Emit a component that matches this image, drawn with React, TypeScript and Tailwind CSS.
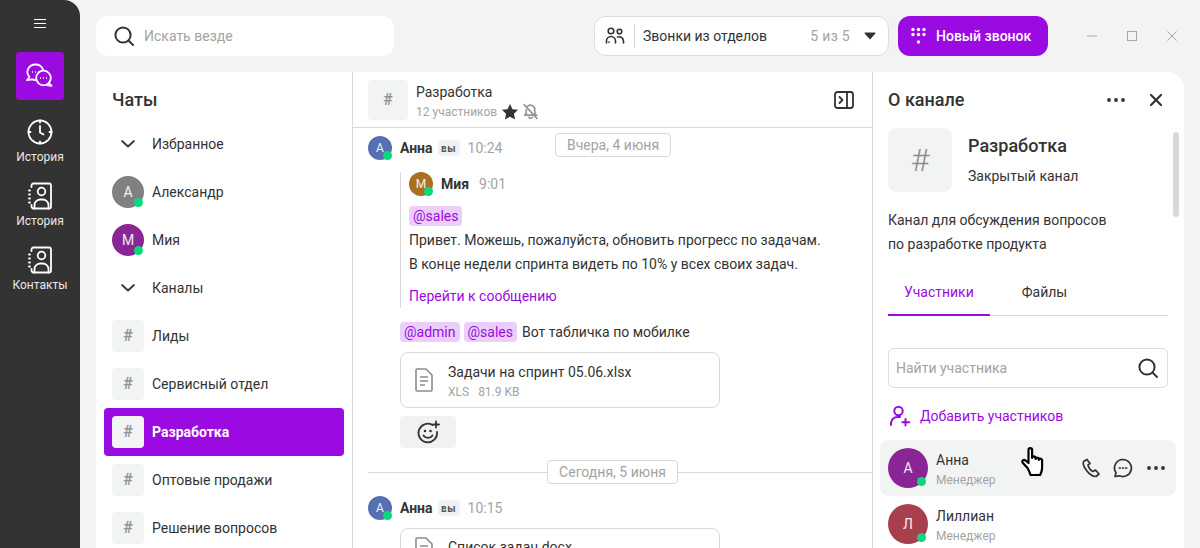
import React from "react";

const P = "#9b0ae0";

function Dot({ className = "" }: { className?: string }) {
  return <span className={"absolute rounded-full bg-[#0ad87a] " + className} />;
}

function Avatar({ letter, color, size }: { letter: string; color: string; size: 24 | 32 | 40 }) {
  const cls = size === 24 ? "w-6 h-6 text-xs" : size === 32 ? "w-8 h-8 text-sm" : "w-10 h-10 text-sm";
  const dot =
    size === 24
      ? "w-[9px] h-[9px] right-0 bottom-0"
      : size === 32
        ? "w-[9px] h-[9px] right-px bottom-px"
        : "w-[9px] h-[9px] right-[2px] bottom-[2px]";
  return (
    <div className={"relative shrink-0 rounded-full flex items-center justify-center text-white/90 " + cls} style={{ backgroundColor: color }}>
      {letter}
      <Dot className={dot} />
    </div>
  );
}

function Hash() {
  return <div className="w-8 h-8 shrink-0 rounded bg-[#f2f4f3] flex items-center justify-center text-[#949494] text-base font-bold">#</div>;
}

function Chevron() {
  return (
    <div className="w-8 flex justify-center shrink-0">
      <svg width="16" height="10" viewBox="0 0 16 10" fill="none" stroke="#333" strokeWidth="1.700" strokeLinecap="round" strokeLinejoin="round">
        <path d="M2 2l6 5.500L14 2" />
      </svg>
    </div>
  );
}

function SearchIcon({ size = 24 }: { size?: number }) {
  return (
    <svg width={size} height={size} viewBox="0 0 24 24" fill="none" stroke="#333" strokeWidth="2" strokeLinecap="round">
      <circle cx="11" cy="11" r="7.600" />
      <path d="M17 17l4 4" />
    </svg>
  );
}

function Dots({ color = "#333" }: { color?: string }) {
  return (
    <svg width="20" height="6" viewBox="0 0 20 6" fill={color}>
      <circle cx="3" cy="3" r="1.900" />
      <circle cx="10" cy="3" r="1.900" />
      <circle cx="17" cy="3" r="1.900" />
    </svg>
  );
}

function ContactIcon() {
  return (
    <svg width="26" height="28" viewBox="0 0 26 28" fill="none" stroke="#fff" strokeWidth="1.800" strokeLinecap="round">
      <path d="M4.500 5V3.500A2 2 0 0 1 6.500 1.500H22A2 2 0 0 1 24 3.500V24.500A2 2 0 0 1 22 26.500H6.500A2 2 0 0 1 4.500 24.500V23" />
      <circle cx="14.500" cy="9.500" r="3.800" />
      <path d="M7.500 26.500V23a6 5.500 0 0 1 6-5.500h2a6 5.500 0 0 1 6 5.500v3.500" />
      <path d="M2 8.500h1M2 12.500h1M2 16.500h1M2 20.500h1" strokeWidth="1.800" />
    </svg>
  );
}

function NavItem({ icon, label }: { icon: React.ReactNode; label: string }) {
  return (
    <div className="h-16 flex flex-col items-center">
      <div className="h-[30px] flex items-center justify-center mt-[5px]">{icon}</div>
      <span className="text-xs leading-4 text-[#e8e8e8] mt-[2px]">{label}</span>
    </div>
  );
}

function Sidebar() {
  return (
    <aside className="w-20 shrink-0 bg-[#333333] rounded-tr-2xl flex flex-col items-center">
      <div className="h-[52px] pt-[19px] flex flex-col gap-[3px] items-center shrink-0">
        <span className="w-3 h-px bg-white block" />
        <span className="w-3 h-px bg-white block" />
        <span className="w-3 h-px bg-white block" />
      </div>
      <div className="w-12 h-12 rounded bg-[#9b0ae0] flex items-center justify-center shrink-0">
        <svg width="30" height="26" viewBox="0 0 30 26" fill="none" stroke="#fff" strokeWidth="1.800">
          <path d="M18 6.500A8 7.500 0 0 0 10.500 1.500a8 7.500 0 0 0-6 12.500L2 17.200l5.500-.8a8 8 0 0 0 3 .6" strokeLinejoin="round" strokeLinecap="round" />
          <circle cx="18.500" cy="15" r="7.300" />
          <path d="M24 20l2.500 2.800-5-.8" strokeLinejoin="round" />
          <path d="M7 9h1M10 9h1M13 9h1M15 15h1M18 15h1M21 15h1" strokeWidth="1.600" />
        </svg>
      </div>
      <div className="mt-3 flex flex-col w-full">
        <NavItem
          label="История"
          icon={
            <svg width="26" height="26" viewBox="0 0 26 26" fill="none" stroke="#fff" strokeWidth="1.800" strokeLinecap="round" strokeLinejoin="round">
              <circle cx="13" cy="13" r="11.500" />
              <path d="M13 7v6.500l3.500 2" />
              <path d="M13 1.500v2M13 22.500v2M1.500 13h2M22.500 13h2" />
            </svg>
          }
        />
        <NavItem label="История" icon={<ContactIcon />} />
        <NavItem label="Контакты" icon={<ContactIcon />} />
      </div>
    </aside>
  );
}

function TopBar() {
  return (
    <header className="h-[72px] shrink-0 flex items-center pl-4">
      <div className="w-[298px] h-10 bg-white rounded-xl flex items-center pl-[16px] gap-[8px]">
        <SearchIcon />
        <span className="text-sm text-[#a3a3a3]">Искать везде</span>
      </div>
      <div className="ml-[200px] w-[295px] h-10 shrink-0 bg-white rounded-xl border border-[#dcdcdc] flex items-center pl-[10px] pr-[12px]">
        <svg width="20" height="18" viewBox="0 0 20 18" fill="none" stroke="#333" strokeWidth="1.600" strokeLinecap="round">
          <circle cx="6" cy="4" r="2.800" />
          <circle cx="14.500" cy="4.500" r="2.300" />
          <path d="M1.500 16v-2a4.500 4.500 0 0 1 9 0v2M12.500 10a4.500 4.500 0 0 1 6 4v2M4 15l.1.1" />
        </svg>
        <span className="w-px h-6 bg-[#dcdcdc] ml-[9px] mr-[8px]" />
        <span className="text-sm text-[#333]">Звонки из отделов</span>
        <span className="ml-auto text-sm text-[#a3a3a3] tracking-[0.3px]">5 из 5</span>
        <svg className="ml-[14px]" width="12" height="8" viewBox="0 0 12 8" fill="#333">
          <path d="M1 .5h10a.6.6 0 0 1 .4 1L6.500 7a.7.7 0 0 1-1 0L.6 1.500a.6.6 0 0 1 .4-1z" />
        </svg>
      </div>
      <div className="ml-[9px] w-[150px] h-10 shrink-0 rounded-xl bg-[#9b0ae0] flex items-center pl-[12px] gap-[9px]">
        <svg width="17" height="18" viewBox="0 0 17 18" fill="#fff">
          <circle cx="3" cy="2.500" r="1.700" /><circle cx="8.500" cy="2.500" r="1.700" /><circle cx="14" cy="2.500" r="1.700" />
          <circle cx="3" cy="7.500" r="1.700" /><circle cx="8.500" cy="7.500" r="1.700" /><circle cx="14" cy="7.500" r="1.700" />
          <circle cx="8.500" cy="15" r="1.700" />
        </svg>
        <span className="text-sm font-medium text-white">Новый звонок</span>
      </div>
      <div className="ml-[39px] flex items-center gap-[30px]">
        <svg width="10" height="10" viewBox="0 0 10 10" stroke="#a6a6a6" fill="none"><path d="M0 5h10" /></svg>
        <svg width="10" height="10" viewBox="0 0 10 10" stroke="#a6a6a6" fill="none"><rect x=".5" y=".5" width="9" height="9" /></svg>
        <svg width="10" height="10" viewBox="0 0 10 10" stroke="#a6a6a6" fill="none"><path d="M.5.5l9 9M9.500.5l-9 9" /></svg>
      </div>
    </header>
  );
}

function ChatRow({ children, label, active }: { children: React.ReactNode; label: string; active?: boolean }) {
  return (
    <div className={"h-12 mx-2 px-2 rounded flex items-center gap-2 shrink-0 " + (active ? "bg-[#9b0ae0]" : "")}>
      {children}
      <span className={"text-sm " + (active ? "text-white font-bold" : "text-[#333]")}>{label}</span>
    </div>
  );
}

function ChatList() {
  return (
    <section className="w-[257px] shrink-0 bg-white border-r border-[#d9d9d9] flex flex-col overflow-hidden">
      <div className="h-12 shrink-0 pl-4 pt-2 flex items-center text-lg font-medium text-[#333]">Чаты</div>
      <ChatRow label="Избранное"><Chevron /></ChatRow>
      <ChatRow label="Александр"><Avatar letter="А" color="#808080" size={32} /></ChatRow>
      <ChatRow label="Мия"><Avatar letter="М" color="#8a2596" size={32} /></ChatRow>
      <ChatRow label="Каналы"><Chevron /></ChatRow>
      <ChatRow label="Лиды"><Hash /></ChatRow>
      <ChatRow label="Сервисный отдел"><Hash /></ChatRow>
      <ChatRow label="Разработка" active><Hash /></ChatRow>
      <ChatRow label="Оптовые продажи"><Hash /></ChatRow>
      <ChatRow label="Решение вопросов"><Hash /></ChatRow>
    </section>
  );
}

function Sender({ letter, color, name, you, time }: { letter: string; color: string; name: string; you?: boolean; time: string }) {
  return (
    <div className="flex items-center h-6">
      <Avatar letter={letter} color={color} size={24} />
      <span className="ml-2 text-sm font-bold text-[#333]">{name}</span>
      {you && (
        <span className="ml-[5px] w-[22px] h-4 rounded-sm bg-[#f0f2f1] flex items-center justify-center text-[10px] font-bold text-[#555] tracking-[0.5px]">
          вы
        </span>
      )}
      <span className={"text-sm text-[#a3a3a3] " + (you ? "ml-2" : "ml-[10px]")}>{time}</span>
    </div>
  );
}

function Chip({ children }: { children: React.ReactNode }) {
  return <span className="inline-flex items-center h-5 px-1 rounded bg-[#ebcffa] text-sm text-[#9b0ae0]">{children}</span>;
}

function FileIcon() {
  return (
    <svg width="18" height="24" viewBox="0 0 18 24" fill="none" stroke="#8c8c8c" strokeWidth="1.600" strokeLinejoin="round">
      <path d="M2 1h9l6 6v15a1 1 0 0 1-1 1H2a1 1 0 0 1-1-1V2a1 1 0 0 1 1-1z" />
      <path d="M5 9h8M5 13h8M5 17h5" />
    </svg>
  );
}

function DatePill({ children }: { children: React.ReactNode }) {
  return <span className="h-6 px-[11px] rounded border border-[#d9d9d9] bg-white flex items-center text-sm text-[#a3a3a3]">{children}</span>;
}

function ChatPanel() {
  return (
    <section className="w-[520px] shrink-0 bg-white border-r border-[#d9d9d9] flex flex-col overflow-hidden relative">
      <div className="h-14 shrink-0 border-b border-[#d9d9d9] flex items-center pl-[15px] pr-[18px]">
        <div className="w-10 h-10 rounded bg-[#f2f4f3] flex items-center justify-center text-[#949494] font-bold">#</div>
        <div className="ml-2">
          <div className="text-sm leading-5 text-[#333] mt-[2px]">Разработка</div>
          <div className="flex items-center h-4 mt-[2px]">
            <span className="text-xs text-[#a3a3a3]">12 участников</span>
            <svg className="ml-[4px]" width="18" height="18" viewBox="0 0 16 16" fill="#333">
              <path d="M8 .8l2.200 4.700 5 .6-3.700 3.500 1 5.100L8 12.200l-4.500 2.500 1-5.100L.8 6.100l5-.6z" />
            </svg>
            <svg className="ml-[3px]" width="17" height="17" viewBox="0 0 16 16" fill="none" stroke="#949494" strokeWidth="1.600" strokeLinecap="round">
              <path d="M4 11.500h9.500l-1.500-2V6.500A4 4 0 0 0 5.500 3M4 6.500v3l-1.500 2M6.500 13.500a1.700 1.700 0 0 0 3 0M2 1.500l12 13" />
            </svg>
          </div>
        </div>
        <svg className="ml-auto" width="20" height="18" viewBox="0 0 20 18" fill="none" stroke="#333" strokeWidth="1.800" strokeLinecap="round" strokeLinejoin="round">
          <rect x="1" y="1" width="18" height="16" rx="2.500" />
          <path d="M13 1v16M5.500 6l3 3-3 3" />
        </svg>
      </div>
      <div className="absolute top-[61px] left-[202px]">
        <DatePill>Вчера, 4 июня</DatePill>
      </div>
      <div className="pl-[15px] pt-2 flex flex-col">
        <Sender letter="А" color="#5470b0" name="Анна" you time="10:24" />
        <div className="ml-8 mt-3 border-l border-[#d9d9d9] pl-2 h-[136px]">
          <Sender letter="М" color="#a9701f" name="Мия" time="9:01" />
          <div className="mt-[10px] h-5 flex"><Chip>@sales</Chip></div>
          <div className="mt-[2px] text-sm leading-6 text-[#333]">
            <div>Привет. Можешь, пожалуйста, обновить прогресс по задачам.</div>
            <div>В конце недели спринта видеть по 10% у всех своих задач.</div>
          </div>
          <div className="mt-2 text-sm leading-6 text-[#9b0ae0]">Перейти к сообщению</div>
        </div>
        <div className="ml-8 mt-[14px] h-5 flex items-center gap-[4px] text-sm text-[#333]">
          <Chip>@admin</Chip>
          <Chip>@sales</Chip>
          <span className="ml-px">Вот табличка по мобилке</span>
        </div>
        <div className="ml-8 mt-[10px] w-80 h-14 rounded-lg border border-[#d9d9d9] flex items-center pl-[14px] gap-[15px]">
          <FileIcon />
          <div className="mt-[2px]">
            <div className="text-sm leading-5 text-[#333]">Задачи на спринт 05.06.xlsx</div>
            <div className="text-xs leading-4 mt-[2px] text-[#a3a3a3] flex gap-[9px]"><span>XLS</span><span>81.9 KB</span></div>
          </div>
        </div>
        <div className="ml-8 mt-2 w-14 h-8 rounded bg-[#f0f2f1] flex items-center justify-center">
          <svg width="24" height="24" viewBox="0 0 24 24" fill="none" stroke="#333" strokeWidth="1.800" strokeLinecap="round">
            <path d="M16.500 5A9.300 9.300 0 1 0 21 12" />
            <circle cx="9" cy="11" r=".6" fill="#333" strokeWidth="1.400" />
            <circle cx="14.500" cy="11" r=".6" fill="#333" strokeWidth="1.400" />
            <path d="M7.500 15.500a5.500 5.500 0 0 0 9 0M20 1.500v6M17 4.500h6" />
          </svg>
        </div>
        <div className="relative mt-3 h-6 flex items-center justify-center">
          <div className="absolute left-0 right-0 top-3 h-px bg-[#d9d9d9]" />
          <div className="relative -ml-[15px]"><DatePill>Сегодня, 5 июня</DatePill></div>
        </div>
        <div className="mt-3">
          <Sender letter="А" color="#5470b0" name="Анна" you time="10:15" />
        </div>
        <div className="ml-8 mt-2 w-80 h-14 rounded-lg border border-[#d9d9d9] flex items-start pl-[14px] pt-[8px] gap-[15px] shrink-0">
          <FileIcon />
          <div className="text-sm leading-5 text-[#333]">Список задач.docx</div>
        </div>
      </div>
    </section>
  );
}

function Member({ letter, color, name, active }: { letter: string; color: string; name: string; active?: boolean }) {
  return (
    <div className={"h-14 w-[296px] ml-[7px] pl-2 pr-[10px] rounded-lg flex items-center shrink-0 " + (active ? "bg-[#f2f4f3]" : "")}>
      <Avatar letter={letter} color={color} size={40} />
      <div className="ml-2 mt-[2px]">
        <div className="text-sm leading-5 text-[#333]">{name}</div>
        <div className="text-xs leading-4 mt-[2px] text-[#a3a3a3]">Менеджер</div>
      </div>
      {active && (
        <div className="ml-auto flex items-center">
          <svg width="20" height="20" viewBox="0 0 20 20" fill="none" stroke="#333" strokeWidth="1.700" strokeLinejoin="round">
            <path d="M6 1.500L2.500 3.500C1 7 7.500 18.500 15 18.500l3-2.500-3.500-4-2.700 1.500C10 12.500 7.500 9.500 7 7l2-1.500z" />
          </svg>
          <svg className="ml-[12px]" width="20" height="20" viewBox="0 0 20 20" fill="none" stroke="#333" strokeWidth="1.700" strokeLinejoin="round">
            <path d="M10 1.500a8.500 8.500 0 1 1-3.500 16.300L2 18.500l1-3.700A8.500 8.500 0 0 1 10 1.500z" />
            <path d="M6.300 10h1M9.500 10h1M12.700 10h1" strokeWidth="1.700" strokeLinecap="round" />
          </svg>
          <span className="ml-[13px] flex"><Dots /></span>
        </div>
      )}
    </div>
  );
}

function InfoPanel() {
  return (
    <section className="flex-1 bg-white rounded-tr-2xl flex flex-col overflow-hidden relative">
      <div className="absolute top-[60px] right-[5px] w-[6px] h-[85px] rounded-full bg-[#d9d9d9]" />
      <div className="h-14 shrink-0 pl-[15px] pr-5 flex items-center">
        <span className="text-lg font-medium text-[#333]">О канале</span>
        <span className="ml-auto flex"><Dots /></span>
        <svg className="ml-[23px] mr-px" width="14" height="14" viewBox="0 0 14 14" stroke="#333" strokeWidth="2.200" strokeLinecap="round" fill="none">
          <path d="M2 2l10 10M12 2L2 12" />
        </svg>
      </div>
      <div className="ml-[15px] flex">
        <div className="w-16 h-16 rounded-lg bg-[#f2f4f3] flex items-center justify-center text-[32px] font-light text-[#8c8c8c]">#</div>
        <div className="ml-4">
          <div className="text-lg leading-6 font-medium text-[#333] mt-[6px]">Разработка</div>
          <div className="text-sm leading-5 text-[#333] mt-2">Закрытый канал</div>
        </div>
      </div>
      <div className="ml-[15px] mt-4 text-sm leading-6 text-[#333]">
        <div>Канал для обсуждения вопросов</div>
        <div>по разработке продукта</div>
      </div>
      <div className="ml-[15px] w-[280px] mt-[12px] h-[48px] border-b border-[#d9d9d9] flex relative shrink-0">
        <span className="ml-[16px] mt-[14px] text-sm leading-5 text-[#9b0ae0]">Участники</span>
        <span className="ml-[48px] mt-[14px] text-sm leading-5 text-[#333]">Файлы</span>
        <span className="absolute left-0 -bottom-px w-[102px] h-[2px] bg-[#9b0ae0]" />
      </div>
      <div className="ml-[15px] mt-8 w-[280px] h-10 rounded-md border border-[#dedede] flex items-center pl-[7px] pr-[7px] shrink-0">
        <span className="text-sm text-[#a3a3a3]">Найти участника</span>
        <span className="ml-auto flex"><SearchIcon /></span>
      </div>
      <div className="ml-[15px] mt-4 h-6 flex items-center shrink-0">
        <svg className="ml-[1px]" width="22" height="22" viewBox="0 0 21 22" fill="none" stroke={P} strokeWidth="2" strokeLinecap="round">
          <circle cx="9" cy="6" r="4.200" />
          <path d="M1.500 20v-2a6.500 6.500 0 0 1 6.500-6h2.500M16 14v6.500M12.800 17.300h7" />
        </svg>
        <span className="ml-[9px] text-sm text-[#9b0ae0]">Добавить участников</span>
      </div>
      <div className="mt-3 flex flex-col">
        <Member letter="А" color="#8a2596" name="Анна" active />
        <Member letter="Л" color="#a83f4c" name="Лиллиан" />
      </div>
      <svg className="absolute top-[374px] left-[147px]" width="26" height="32" viewBox="0 0 26 32" fill="#fff" stroke="#000" strokeWidth="2.200" strokeLinejoin="round" strokeLinecap="round">
        <path d="M7.500 22l-5-5.500c-1-1.500 1-3.500 3-2l3 2.500V4a1.800 1.800 0 0 1 3.600 0v8a1.700 1.700 0 0 1 3.400 0v1a1.700 1.700 0 0 1 3.300 0v1a1.700 1.700 0 0 1 3.300 1v7c0 3-1 5-2 7H10.500c-.5-2-1.500-4.500-3-7z" />
      </svg>
    </section>
  );
}

export default function App() {
  return (
    <div className="w-[1200px] h-[548px] overflow-hidden flex bg-[#f2f4f3] font-['Roboto',sans-serif]">
      <Sidebar />
      <div className="flex-1 flex flex-col min-w-0">
        <TopBar />
        <main className="flex-1 flex min-h-0 ml-4 mr-4">
          <ChatList />
          <ChatPanel />
          <InfoPanel />
        </main>
      </div>
    </div>
  );
}
